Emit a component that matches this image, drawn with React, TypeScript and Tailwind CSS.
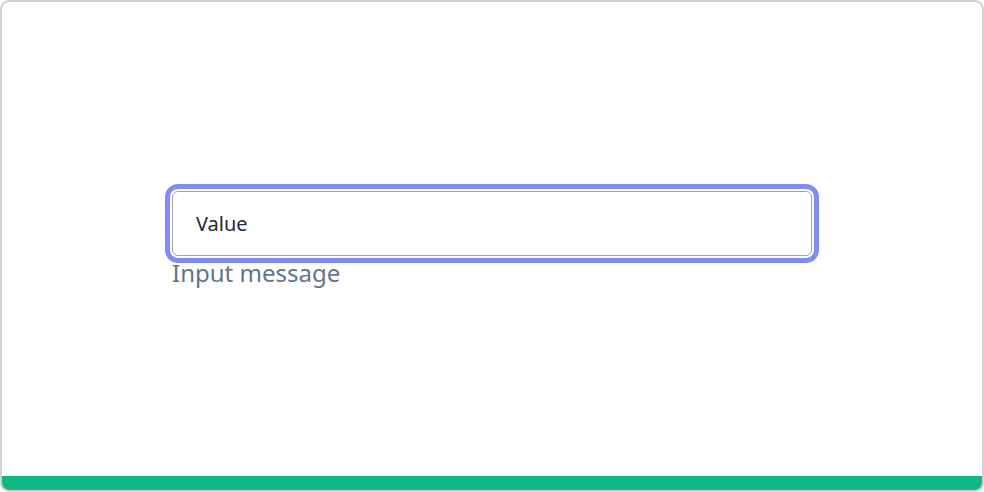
export default function App() {
  return (
    <div className="h-[492px] w-[984px] bg-white font-['Noto_Sans',sans-serif]">
      <div className="flex h-full flex-col overflow-hidden rounded-[9px] border-2 border-[#d2d2d6]">
        <div className="flex flex-1 flex-col items-center justify-center pt-[2px]">
          <div className="flex w-[640px] flex-col">
            <input
              readOnly
              value="Value"
              className="h-[65px] w-full rounded-[6px] border border-[#a3a3ab] bg-white pl-[23px] text-[20px] text-[#1e293b] shadow-[0_0_0_2px_#ffffff,0_0_0_7px_#818cf8] outline-none"
            />
            <span className="mt-[1px] text-[24px] leading-[32px] text-[#64748b]">Input message</span>
          </div>
        </div>
        <div className="h-[14px] bg-[#10b981]" />
      </div>
    </div>
  );
}
